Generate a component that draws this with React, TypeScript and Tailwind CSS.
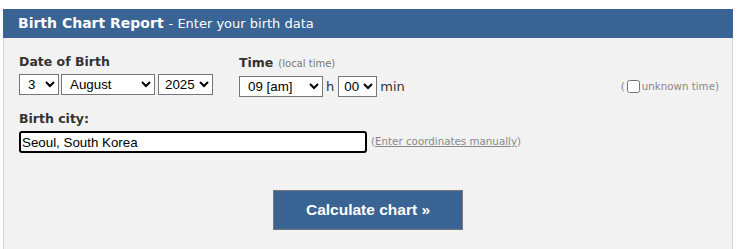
import React from 'react';

const days = Array.from({ length: 31 }, (_, i) => String(i + 1));
const months = [
  'January', 'February', 'March', 'April', 'May', 'June',
  'July', 'August', 'September', 'October', 'November', 'December'
];
const years = Array.from({ length: 126 }, (_, i) => String(1900 + i));
const hours = Array.from({ length: 24 }, (_, i) => {
  const h = i % 12 === 0 ? 12 : i % 12;
  return `${String(h).padStart(2, '0')} [${i < 12 ? 'am' : 'pm'}]`;
});
const minutes = Array.from({ length: 60 }, (_, i) => String(i).padStart(2, '0'));

const selectCls =
  "h-[21px] bg-white border border-[#767676] text-black text-[13.333px] font-['Liberation_Sans',Arial,sans-serif]";

export default function App() {
  return (
    <div className="w-[738px] h-[249px] bg-white pt-[9px] pl-[3px] overflow-hidden">
      <div className="w-[730px]">
        <div className="h-[29px] bg-[#3a6494] flex items-center pl-[15px] text-white font-['DejaVu_Sans',Verdana,sans-serif]">
          <span className="text-[14px] font-bold">Birth Chart Report</span>
          <span className="text-[13px] ml-[5px]">- Enter your birth data</span>
        </div>

        <div className="h-[211px] bg-[#f2f2f2] border-x border-[#d6d6d6] pl-[15px] pr-[13px] pt-[16px] text-[#333] font-['DejaVu_Sans',Verdana,sans-serif]">
          <div className="flex">
            <div className="w-[220px] shrink-0">
              <div className="text-[12.5px] font-bold leading-[15px] mb-[5px]">Date of Birth</div>
              <div className="flex items-center">
                <select className={`${selectCls} w-[40px] pl-[4px]`} defaultValue="3">
                  {days.map((d) => (
                    <option key={d}>{d}</option>
                  ))}
                </select>
                <select className={`${selectCls} w-[94px] ml-[2px] pl-[4px]`} defaultValue="August">
                  {months.map((m) => (
                    <option key={m}>{m}</option>
                  ))}
                </select>
                <select className={`${selectCls} w-[55px] ml-[3px] pl-[2px]`} defaultValue="2025">
                  {years.map((y) => (
                    <option key={y}>{y}</option>
                  ))}
                </select>
              </div>
            </div>

            <div className="shrink-0">
              <div className="leading-[15px] mb-[5px]">
                <span className="text-[12.5px] font-bold">Time</span>
                <span className="text-[10px] text-[#777] ml-[5px]">(local time)</span>
              </div>
              <div className="flex items-center text-[13px]">
                <select className={`${selectCls} w-[84px] pl-[4px]`} defaultValue="09 [am]">
                  {hours.map((h) => (
                    <option key={h}>{h}</option>
                  ))}
                </select>
                <span className="ml-[3px]">h</span>
                <select className={`${selectCls} w-[39px] ml-[4px] pl-[1px]`} defaultValue="00">
                  {minutes.map((m) => (
                    <option key={m}>{m}</option>
                  ))}
                </select>
                <span className="ml-[3px]">min</span>
              </div>
            </div>

            <div className="ml-auto self-end h-[21px] flex items-center text-[10.3px] text-[#888]">
              <span>(</span>
              <input type="checkbox" className="m-0 mx-[2px] w-[13px] h-[13px]" />
              <span>unknown time)</span>
            </div>
          </div>

          <div className="mt-[14px] text-[12.5px] font-bold leading-[15px] mb-[5px]">Birth city:</div>
          <div className="flex items-center">
            <input
              type="text"
              defaultValue="Seoul, South Korea"
              className="w-[348px] h-[22px] border-2 border-black rounded-[3px] bg-white px-[1px] text-black text-[13.333px] font-['Liberation_Sans',Arial,sans-serif]"
            />
            <span className="ml-[4px] text-[10.3px] text-[#888]">
              (<a href="#" className="underline">Enter coordinates manually</a>)
            </span>
          </div>

          <div className="flex justify-center mt-[37px] pr-[2px]">
            <button className="w-[190px] h-[40px] bg-[#3a6494] border border-[#777] text-white font-bold text-[15.5px] font-['Liberation_Sans',Arial,sans-serif]">
              Calculate chart »
            </button>
          </div>
        </div>
      </div>
    </div>
  );
}
